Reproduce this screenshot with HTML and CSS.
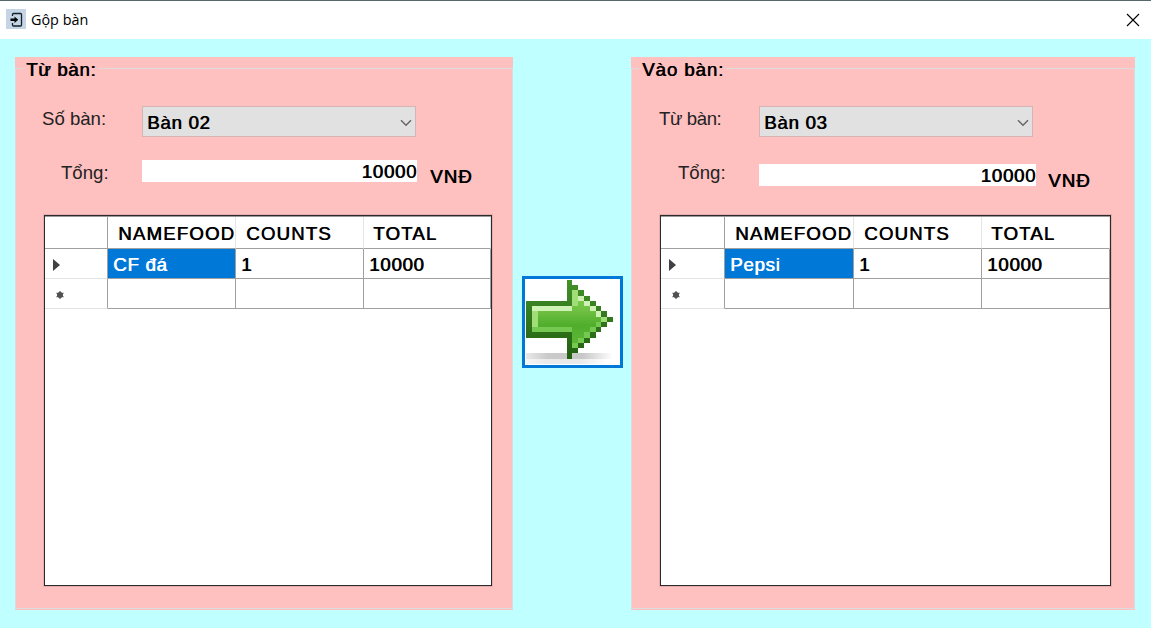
FILE: index.html
```html
<!DOCTYPE html>
<html lang="vi">
<head>
<meta charset="utf-8">
<title>Gộp bàn</title>
<link rel="stylesheet" href="styles.css">
</head>
<body>
<div class="window">
  <header class="titlebar">
    <svg class="app-icon" width="20" height="20" viewBox="0 0 20 20">
      <rect width="20" height="20" fill="#c6d5e5"/>
      <path d="M6.500 7V5.500Q6.500 4.500 7.500 4.500H14.500Q15.500 4.500 15.500 5.500V16Q15.500 17 14.500 17H7.500Q6.500 17 6.500 16V14" fill="none" stroke="#15202b" stroke-width="1.300"/>
      <path d="M4.500 9.500H8.500V7.500L12.300 10.700L8.500 14V12H4.500Z" fill="#05090d"/>
    </svg>
    <span class="title">Gộp bàn</span>
    <svg class="close" width="14" height="14" viewBox="0 0 14 14"><path d="M1 1L13 13M13 1L1 13" stroke="#000" stroke-width="1.100"/></svg>
  </header>
  <main class="content">
    <section class="panel from">
      <div class="frame">
        <h2 class="legend strong">Từ bàn:</h2>
        <div class="field table-field">
          <label class="label">Số bàn:</label>
          <div class="select strong"><span>Bàn 02</span><svg width="12" height="8" viewBox="0 0 12 8"><path d="M1 1.300L6 6.200L11 1.300" fill="none" stroke="#666" stroke-width="1.500"/></svg></div>
        </div>
        <div class="field total-field">
          <label class="label">Tổng:</label>
          <div class="amount strong">10000</div>
          <span class="unit strong">VNĐ</span>
        </div>
        <div class="grid">
          <div class="row head strong"><div></div><div>NAMEFOOD</div><div>COUNTS</div><div>TOTAL</div></div>
          <div class="row strong"><div class="mark"><svg width="7" height="12" viewBox="0 0 7 12"><path d="M0 0L7 6L0 12Z" fill="#404040"/></svg></div><div class="selected">CF đá</div><div>1</div><div>10000</div></div>
          <div class="row"><div class="mark star"><svg width="8" height="8" viewBox="0 0 8 8"><path d="M4 0V8M0.500 2L7.500 6M7.500 2L0.500 6" stroke="#666" stroke-width="1.300"/><circle cx="4" cy="4" r="3" fill="#505050"/></svg></div><div></div><div></div><div></div></div>
        </div>
      </div>
    </section>
    <button class="move" aria-label="Gộp">
      <svg width="94" height="86" viewBox="0 0 16.200 16.400" preserveAspectRatio="none" shape-rendering="crispEdges">
        <defs>
          <linearGradient id="edge" x1="0" y1="0" x2="0" y2="1"><stop offset="0" stop-color="#439129"/><stop offset="1" stop-color="#225f10"/></linearGradient>
          <linearGradient id="body" x1="0" y1="0" x2="0" y2="1"><stop offset="0" stop-color="#82d153"/><stop offset=".35" stop-color="#70c044"/><stop offset=".6" stop-color="#50ae2b"/><stop offset="1" stop-color="#62b83c"/></linearGradient>
          <linearGradient id="shade"><stop offset="0" stop-color="#e8e8e8"/><stop offset=".25" stop-color="#cacaca"/><stop offset=".65" stop-color="#c8c8c8"/><stop offset="1" stop-color="#fff"/></linearGradient>
        </defs>
        <path d="M0 14H15V15H0Z" fill="url(#shade)"/>
        <path d="M0 15H14V16H0Z" fill="url(#shade)" opacity=".4"/>
        <path d="M7 0H8V1H9V2H10V3H11V4H12V5H13V6H14V7H15V8H14V9H13V10H12V11H11V12H10V13H9V14H8V15H7V11H0V4H7Z" fill="url(#edge)"/>
        <path d="M1 5H8V2H9V3H10V4H11V5H12V6H13V7H14V8H13V9H12V10H11V11H10V12H9V13H8V10H1Z" fill="url(#body)"/>
        <path d="M1 5H8V6H1ZM9 3H10V4H9ZM10 4H11V5H10ZM11 5H12V6H11ZM12 6H13V7H12Z" fill="#cef2b4"/>
        <path d="M8 2H9V4H8ZM1 6H2V9H1ZM13 7H14V8H13ZM8 4H9V5H8Z" fill="#a0de78"/>
        <path d="M1 9H8V10H1ZM8 12H9V13H8ZM9 11H10V12H9ZM10 10H11V11H10ZM11 9H12V10H11ZM12 8H13V9H12Z" fill="#76c950"/>
      </svg>
    </button>
    <section class="panel into">
      <div class="frame">
        <h2 class="legend strong">Vào bàn:</h2>
        <div class="field table-field">
          <label class="label">Từ bàn:</label>
          <div class="select strong"><span>Bàn 03</span><svg width="12" height="8" viewBox="0 0 12 8"><path d="M1 1.300L6 6.200L11 1.300" fill="none" stroke="#666" stroke-width="1.500"/></svg></div>
        </div>
        <div class="field total-field">
          <label class="label">Tổng:</label>
          <div class="amount strong">10000</div>
          <span class="unit strong">VNĐ</span>
        </div>
        <div class="grid">
          <div class="row head strong"><div></div><div>NAMEFOOD</div><div>COUNTS</div><div>TOTAL</div></div>
          <div class="row strong"><div class="mark"><svg width="7" height="12" viewBox="0 0 7 12"><path d="M0 0L7 6L0 12Z" fill="#404040"/></svg></div><div class="selected">Pepsi</div><div>1</div><div>10000</div></div>
          <div class="row"><div class="mark star"><svg width="8" height="8" viewBox="0 0 8 8"><path d="M4 0V8M0.500 2L7.500 6M7.500 2L0.500 6" stroke="#666" stroke-width="1.300"/><circle cx="4" cy="4" r="3" fill="#505050"/></svg></div><div></div><div></div><div></div></div>
        </div>
      </div>
    </section>
  </main>
</div>
</body>
</html>
```
FILE: styles.css
```css
* { box-sizing: border-box; }
body { margin: 0; font: 18.6px "Liberation Sans", Arial, sans-serif; color: #111; }
.window { width: 1151px; height: 628px; background: #c0ffff; border-top: 1px solid #56686c; overflow: hidden; }
.titlebar { height: 38px; background: #fff; display: flex; align-items: center; padding: 0 11px 0 6px; }
.app-icon { display: block; margin-top: -2px; }
.title { flex: 1; margin: -2px 0 0 5px; font: 14.4px "Open Sans", "Noto Sans", sans-serif; color: #000; }
.close { display: block; }
.content { display: flex; padding-left: 15px; height: 589px; }
.panel { margin-top: 18px; height: 553px; padding: 11px 0 1px; background: #ffc0c0; }
.from { width: 498px; --cols: 63px 128px 128px 127px; }
.into { width: 504px; margin-left: 8px; --cols: 64px 129px 128px 128px; }
.frame { height: 541px; border: 1px solid #dcdcdc; }
.strong { color: #000; text-shadow: .7px 0 0 currentColor; letter-spacing: .75px; }
.legend { width: max-content; margin: -11px 0 0 7px; padding: 0 2px 0 3px; height: 22px; line-height: 24px; font-size: 18.6px; font-weight: 400; letter-spacing: .7px; background: #ffc0c0; }
.into .legend { letter-spacing: .95px; }
.field { display: flex; }
.label { width: 100px; margin-left: 26px; color: #222; line-height: 26px; white-space: nowrap; }
.into .label { width: 100px; margin-left: 27px; }
.table-field { margin-top: 26px; height: 32px; }
.into .table-field .label { letter-spacing: -.4px; }
.select { width: 274px; height: 31px; line-height: 30px; padding: 2px 3px 0 3px; background: #e1e1e1; border: 1px solid #aaa7a7; outline: 1px solid #d4b4b4; outline-offset: -1px; display: flex; align-items: center; justify-content: space-between; padding-left: 4px; }
.total-field { margin-top: 22px; height: 32px; }
.total-field .label { padding-left: 19px; }
.amount { width: 275px; height: 22px; line-height: 24px; background: #fff; text-align: right; }
.unit { margin: 4px 0 0 13px; line-height: 25px; letter-spacing: 1.1px; }
.into .amount { width: 277px; margin-top: 4px; }
.into .unit { margin-top: 8px; margin-left: 12px; }
.grid { width: 448px; height: 371px; margin: 23px 0 0 28px; border: 1px solid #2c2a2a; outline: 1px solid rgba(60, 40, 40, .12); background: #fff; }
.into .grid { width: 451px; }
.row { display: grid; grid-template-columns: var(--cols); height: 30px; line-height: 32px; }
.row > div { border-right: 1px solid #a0a0a0; border-bottom: 1px solid #a0a0a0; padding-left: 5px; overflow: hidden; white-space: nowrap; }
.row > .mark { border-bottom-color: #e3e3e3; padding: 10px 0 0 8px; }
.row > .star { padding: 12px 0 0 11px; }
.mark svg { display: block; }
.head { height: 33px; line-height: 33px; border-top: 1px solid #999; letter-spacing: 1.2px; }
.head > div { padding-left: 10px; border-right-color: #e5e5e5; }
.head > div:last-child { padding-left: 9px; }
.head > div:first-child { border-right-color: #a0a0a0; }
.row > .selected { background: #0078d7; color: #fff; }
.move { width: 101px; height: 92px; margin: 237px 0 0 9px; padding: 1px; border: 3px solid #0078d7; background: #fff; }
.move svg { display: block; }
```
